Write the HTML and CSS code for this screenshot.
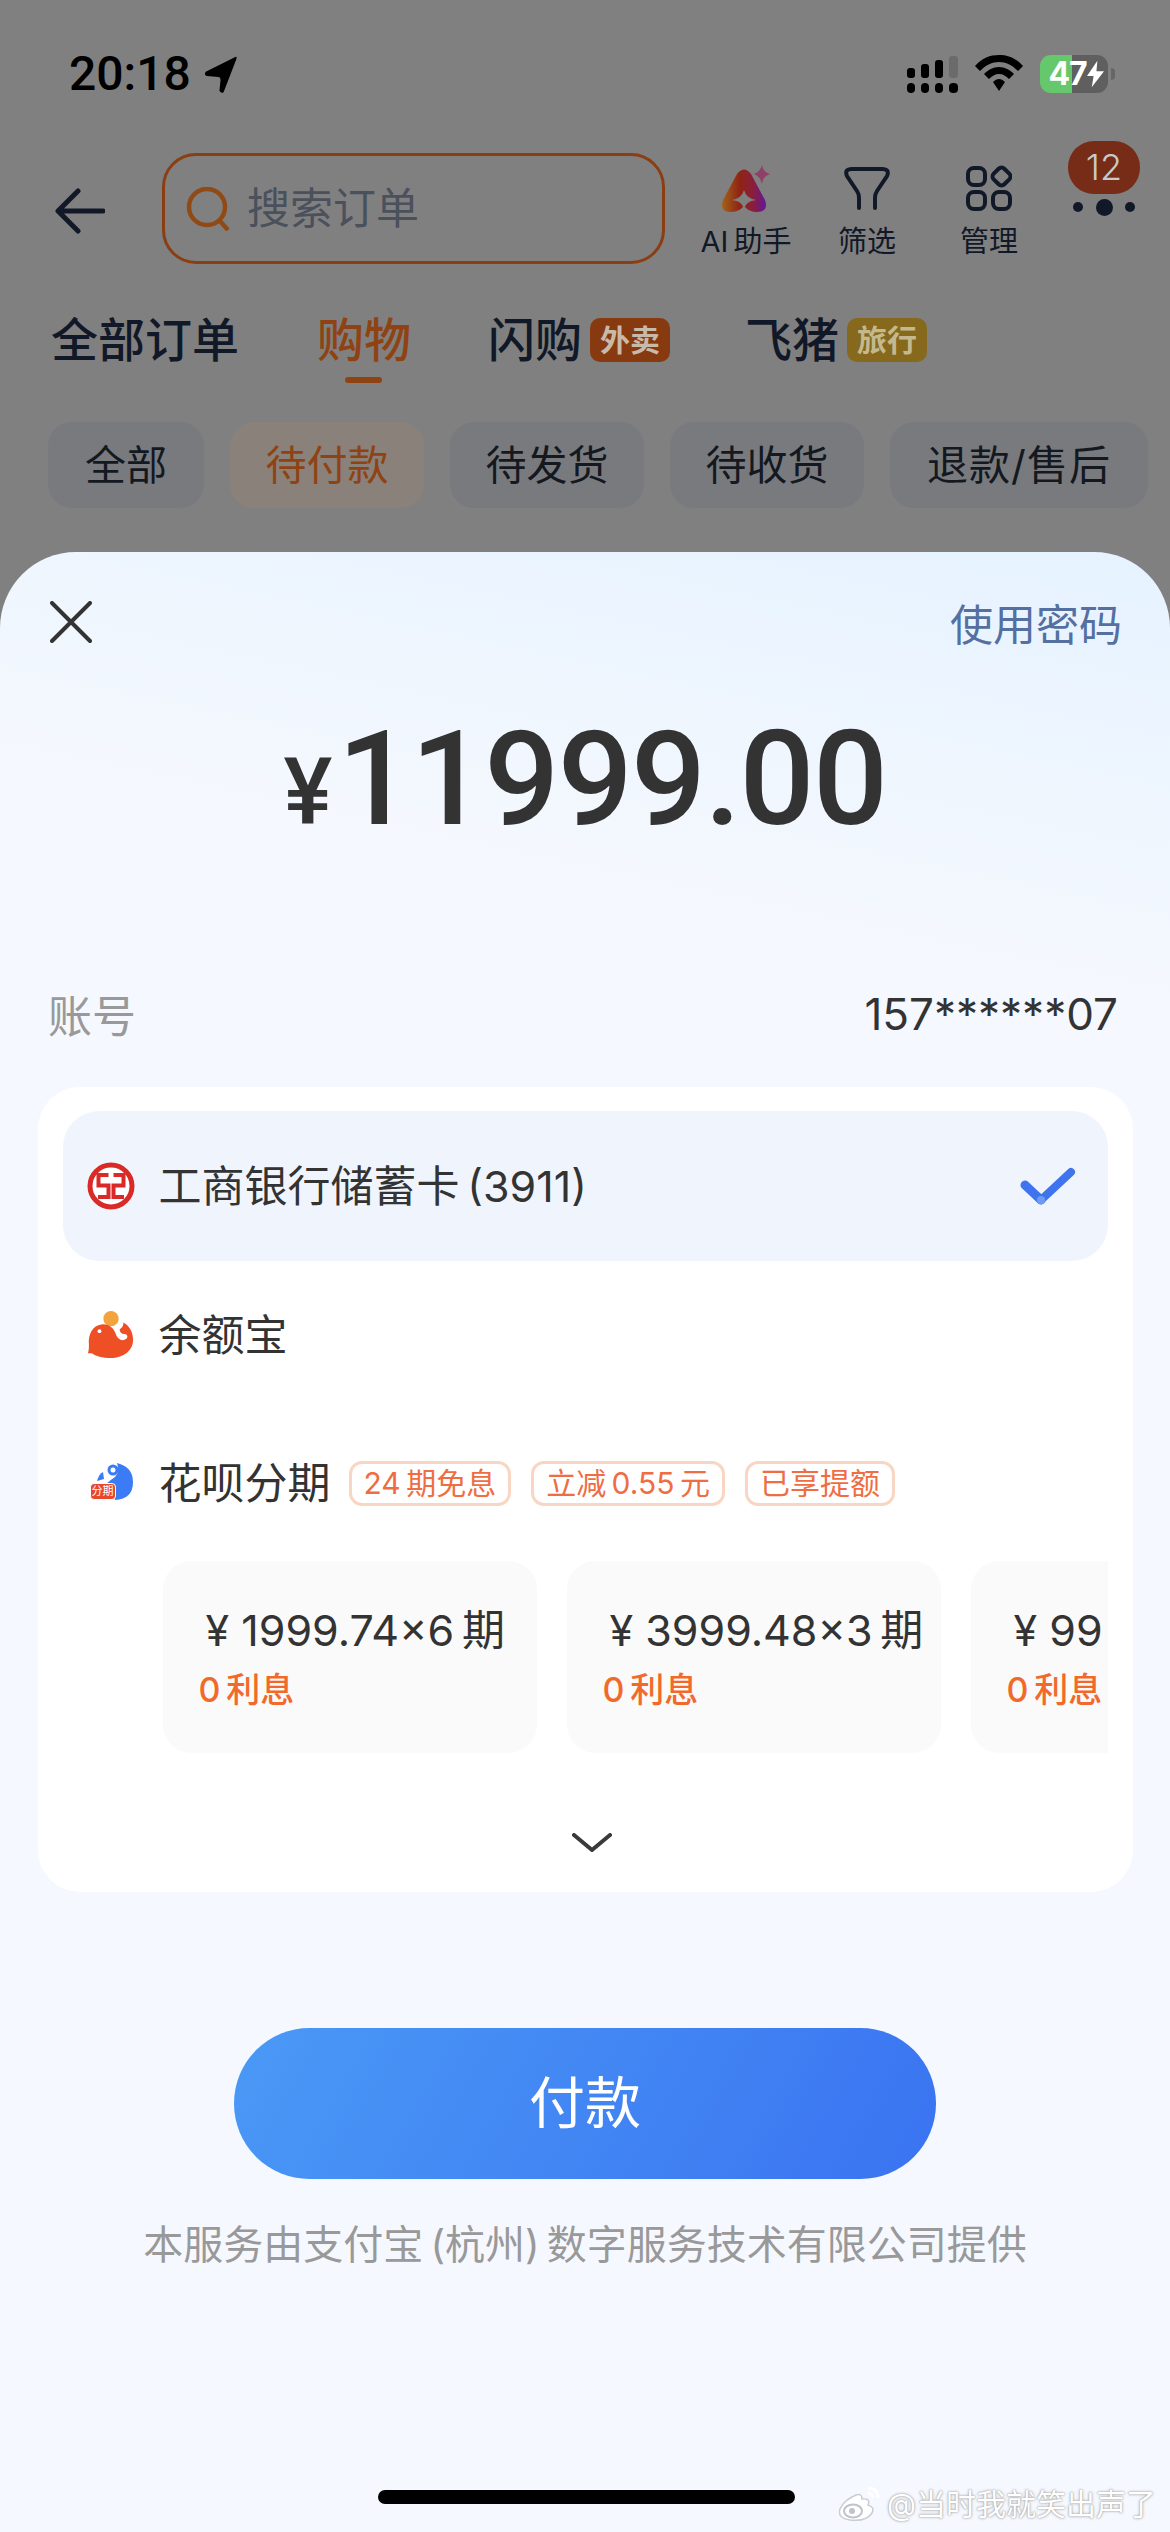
FILE: index.html
```html
<!DOCTYPE html>
<html lang="zh-CN">
<head>
<meta charset="utf-8">
<title>支付</title>
<link rel="stylesheet" href="styles.css">
</head>
<body>
<div class="page">
  <div class="status">
    <div class="status-left">
      <span class="time">20:18</span>
      <svg class="loc" viewBox="0 0 32 36"><path d="M30 1 L2 15 Q0 18 3 19 L14 20 Q16 20 16 23 L15 33 Q17 36 19 34 L31 3 Q32 0 30 1Z" fill="#000"/></svg>
    </div>
    <div class="status-right">
      <svg class="signal" viewBox="0 0 51 37">
        <rect x="0" y="12" width="8" height="10" rx="3" fill="#000"/><rect x="14" y="8" width="8" height="14" rx="3" fill="#000"/><rect x="28" y="4" width="8" height="18" rx="3" fill="#000"/><rect x="42" y="0" width="9" height="22" rx="3" fill="#6b6b6b"/>
        <rect x="0" y="27" width="8" height="10" rx="4" fill="#000"/><rect x="14" y="27" width="8" height="10" rx="4" fill="#000"/><rect x="28" y="27" width="8" height="10" rx="4" fill="#000"/><rect x="42" y="27" width="9" height="10" rx="4" fill="#000"/>
      </svg>
      <svg class="wifi" viewBox="0 0 48 36">
        <path d="M24 0 C33 0 41 3 48 11 L43 16 C37 10 31 7 24 7 C17 7 11 10 5 16 L0 11 C7 3 15 0 24 0Z" fill="#000"/>
        <path d="M24 12 C30 12 35 15 39 19 L34 24 C31 21 28 19 24 19 C20 19 17 21 14 24 L9 19 C13 15 18 12 24 12Z" fill="#000"/>
        <path d="M24 24 C26 24 28 25 30 27 L24 36 L18 27 C20 25 22 24 24 24Z" fill="#000"/>
      </svg>
      <div class="battery">
        <div class="batt-body"><span class="batt-num">47</span>
          <svg class="bolt" viewBox="0 0 18 28"><path d="M11 0 L0 16 H7 L5 28 L18 11 H10Z" fill="#fff"/></svg>
        </div>
        <span class="batt-nub"></span>
      </div>
    </div>
  </div>

  <div class="nav">
    <svg class="back" viewBox="0 0 50 46"><path d="M48 23 H4 M23 3 L3 23 L23 43" fill="none" stroke="#111827" stroke-width="5" stroke-linecap="round" stroke-linejoin="round"/></svg>
    <div class="search">
      <svg class="search-ico" viewBox="0 0 44 44"><circle cx="21" cy="20" r="18" fill="none" stroke="#8f4a16" stroke-width="4.500"/><path d="M33 33 L42 43" stroke="#8f4a16" stroke-width="4.500"/></svg>
      <span class="search-text">搜索订单</span>
    </div>
    <div class="tool tool-ai">
      <svg class="tool-ico" viewBox="0 0 50 48">
        <defs><linearGradient id="aig" x1="0" y1="0.500" x2="1" y2="0.500"><stop offset="0" stop-color="#a2641a"/><stop offset="0.400" stop-color="#8f2413"/><stop offset="0.700" stop-color="#8a1e3a"/><stop offset="1" stop-color="#64169a"/></linearGradient></defs>
        <path d="M16 9 Q23 0 30 9 L44 35 Q48 47 36 47 Q28 47 23 41 Q18 47 9 47 Q-2 47 2 35Z" fill="url(#aig)"/>
        <path d="M23 25 Q25 33 35 35 Q25 36 23 44 Q21 36 11 35 Q21 33 23 25Z" fill="#808080"/>
        <path d="M41 0 Q42 7 49 9 Q42 11 41 19 Q39 11 33 9 Q39 7 41 0Z" fill="#8f3f68"/>
      </svg>
      <span class="tool-label">AI&thinsp;助手</span>
    </div>
    <div class="tool tool-filter">
      <svg class="tool-ico" viewBox="0 0 46 44"><path d="M15 42 V32 Q15 28 13 25 L3 10 Q0 3 8 3 H38 Q46 3 43 10 L33 25 Q31 28 31 32 V42" fill="none" stroke="#111827" stroke-width="4" stroke-linecap="round"/></svg>
      <span class="tool-label">筛选</span>
    </div>
    <div class="tool tool-manage">
      <svg class="tool-ico" viewBox="0 0 46 46">
        <g fill="none" stroke="#111827" stroke-width="4"><rect x="2" y="3" width="17" height="17" rx="6"/><rect x="2" y="27" width="17" height="17" rx="6"/><rect x="27" y="27" width="17" height="17" rx="6"/><rect x="28" y="4" width="15" height="15" rx="4" transform="rotate(45 35.500 11.500)"/></g>
      </svg>
      <span class="tool-label">管理</span>
    </div>
    <div class="more">
      <span class="count">12</span>
      <span class="dots"><i class="dot"></i><i class="dot dot-big"></i><i class="dot"></i></span>
    </div>
  </div>

  <div class="tabs">
    <span class="tab">全部订单</span>
    <span class="tab tab-active">购物</span>
    <span class="tab tab-flash">闪购<em class="mini mini-red">外卖</em></span>
    <span class="tab tab-fly">飞猪<em class="mini mini-gold">旅行</em></span>
  </div>

  <div class="chips">
    <span class="chip chip-a">全部</span>
    <span class="chip chip-b chip-on">待付款</span>
    <span class="chip chip-b">待发货</span>
    <span class="chip chip-b">待收货</span>
    <span class="chip chip-c">退款/售后</span>
  </div>

  <div class="sheet">
    <div class="sheet-top">
      <svg class="close" viewBox="0 0 42 42"><path d="M2 2 L40 40 M40 2 L2 40" stroke="#333" stroke-width="4" stroke-linecap="round"/></svg>
      <span class="pwd">使用密码</span>
    </div>
    <div class="amount"><span class="yen">¥</span><span class="num">11999.00</span></div>
    <div class="account"><span class="acc-label">账号</span><span class="acc-val">157******07</span></div>

    <div class="card">
      <div class="row row-on">
        <svg class="pay-ico" viewBox="0 0 48 48">
          <circle cx="24" cy="24" r="21" fill="#fff" stroke="#d92a27" stroke-width="5"/>
          <path d="M21.500 13 H11.500 V23.500 H21.500 V35 H11 M26.500 13 H36.500 V23.500 H26.500 V35 H37" fill="none" stroke="#d92a27" stroke-width="4"/>
        </svg>
        <span class="row-text">工商银行储蓄卡&thinsp;(3911)</span>
        <svg class="check" viewBox="0 0 56 40">
          <path d="M5 19 L21 34" fill="none" stroke="#3f74ee" stroke-width="9" stroke-linecap="round"/>
          <path d="M21 34 L51 6" fill="none" stroke="#3f74ee" stroke-width="8" stroke-linecap="round"/>
          <circle cx="21" cy="34" r="4" fill="#6e9bf3"/>
        </svg>
      </div>
      <div class="row row-yu">
        <svg class="pay-ico" viewBox="0 0 48 50">
          <circle cx="24" cy="8" r="8" fill="#f2a33c"/>
          <path d="M14 14 C22 13 27 18 29 24 C31 30 36 32 40 29 C42 27 41 24 38 24 C35 24 33 22 33 19 C35 18 37 16 37 12 C44 16 47 23 47 30 C47 42 36 49 24 49 C15 49 8 47 4 44 L0 44 C1 41 1 38 1 35 C0 24 5 15 14 14Z" fill="#ee4f24"/>
          <circle cx="12" cy="21" r="2" fill="#fff"/>
        </svg>
        <span class="row-text">余额宝</span>
      </div>
      <div class="row row-hua">
        <span class="hua">
          <svg class="hua-moon" viewBox="0 0 40 38">
            <path d="M24 0 Q40 4 40 19 Q40 36 22 37 L22 30 L12 22 Q16 18 22 14 Q27 9 24 0Z" fill="#3c7bf6"/>
            <circle cx="20" cy="7" r="4" fill="none" stroke="#3c7bf6" stroke-width="3"/>
            <path d="M4 18 Q6 11 10 9 L11 16Z" fill="#3c7bf6"/>
          </svg>
          <span class="hua-badge">分期</span>
        </span>
        <span class="row-text">花呗分期</span>
        <span class="tags">
          <span class="tag">24&thinsp;期免息</span>
          <span class="tag">立减&thinsp;0.55&thinsp;元</span>
          <span class="tag">已享提额</span>
        </span>
      </div>
      <div class="plans">
        <div class="plan"><span class="plan-main">¥ 1999.74×6&thinsp;期</span><span class="plan-sub">0&thinsp;利息</span></div>
        <div class="plan"><span class="plan-main">¥ 3999.48×3&thinsp;期</span><span class="plan-sub">0&thinsp;利息</span></div>
        <div class="plan"><span class="plan-main">¥ 99</span><span class="plan-sub">0&thinsp;利息</span></div>
      </div>
      <svg class="chev" viewBox="0 0 40 20"><path d="M2 2 L20 17 L38 2" fill="none" stroke="#3a3a3a" stroke-width="4" stroke-linecap="round" stroke-linejoin="round"/></svg>
    </div>

    <div class="pay">付款</div>
    <div class="foot">本服务由支付宝&thinsp;(杭州)&thinsp;数字服务技术有限公司提供</div>
  </div>

  <div class="home"></div>
  <div class="mark">
    <svg class="weibo" viewBox="0 0 44 38">
      <path d="M18 11 Q6 16 2 25 Q-1 34 12 36 Q28 38 34 29 Q37 23 30 21 Q33 14 24 15 Q24 9 18 11Z" fill="#fff" stroke="#c9ccd2" stroke-width="1.500"/>
      <ellipse cx="15" cy="27" rx="9" ry="6.500" fill="none" stroke="#bfc3ca" stroke-width="2"/>
      <circle cx="14" cy="27" r="3" fill="#bfc3ca"/>
      <path d="M30 4 Q40 4 40 14 M30 9 Q35 9 35 14" fill="none" stroke="#fff" stroke-width="3"/>
    </svg>
    <span class="mark-text">@当时我就笑出声了</span>
  </div>
</div>
</body>
</html>
```

FILE: styles.css
```css
* { box-sizing: border-box; }
html, body { margin: 0; padding: 0; }
body { font-family: "Inter", "Noto Sans CJK SC", sans-serif; }
em, i { font-style: normal; }
svg { display: block; flex: none; }

.page {
  position: relative;
  width: 1170px;
  height: 2532px;
  overflow: hidden;
  background: #808080;
  display: flex;
  flex-direction: column;
}

/* status bar */
.status {
  height: 153px;
  padding: 55px 55px 0 69px;
  display: flex;
  justify-content: space-between;
  align-items: flex-start;
}
.status-left { display: flex; align-items: center; gap: 11px; height: 38px; }
.time { font-family: "Roboto", sans-serif; font-size: 48px; font-weight: 500; color: #000; line-height: 38px; }
.loc { width: 37px; height: 38px; margin-top: 1px; }
.status-right { display: flex; align-items: flex-start; }
.signal { width: 51px; height: 37px; margin-top: 1px; }
.wifi { width: 48px; height: 36px; margin-left: 17px; }
.battery { display: flex; align-items: center; margin-left: 17px; }
.batt-body {
  width: 68px; height: 38px; border-radius: 11px;
  background: linear-gradient(90deg, #66c86d 0 47%, #5f5f5f 47% 100%);
  display: flex; align-items: center; justify-content: center; gap: 0;
  padding-left: 4px;
}
.batt-num { font-family: "Inter", sans-serif; font-size: 32px; font-weight: 700; color: #fff; line-height: 38px; letter-spacing: -1px; }
.bolt { width: 17px; height: 28px; }
.batt-nub { width: 4px; height: 12px; background: #666; border-radius: 0 4px 4px 0; margin-left: 3px; }

/* nav row */
.nav {
  height: 111px;
  padding-left: 55px;
  display: flex;
  align-items: flex-start;
}
.back { width: 50px; height: 46px; margin-top: 35px; }
.search {
  width: 503px; height: 111px; margin-left: 57px;
  border: 3px solid #8a3e12;
  border-radius: 34px;
  display: flex; align-items: center;
  padding-left: 21px; gap: 17px;
}
.search-ico { width: 44px; height: 44px; }
.search-text { font-size: 43px; color: #4a505c; line-height: 1; }
.tool { display: flex; flex-direction: column; align-items: center; width: 80px; margin-top: 12px; }
.tool-ico { height: 46px; width: 46px; }
.tool-ai { margin-left: 31px; width: 100px; }
.tool-ai .tool-ico { width: 50px; height: 48px; }
.tool-filter { margin-left: 31px; }
.tool-manage { margin-left: 42px; }
.tool-label { font-size: 29px; line-height: 36px; color: #111827; margin-top: 13px; white-space: nowrap; }
.tool-ai .tool-label { margin-top: 11px; }
.more { position: relative; margin-left: 39px; width: 74px; height: 70px; margin-top: -12px; }
.count {
  position: absolute; left: 0; top: 0;
  width: 72px; height: 53px; border-radius: 26px;
  background: #762c17; color: #c9c9c9;
  font-size: 36px; font-weight: 300; line-height: 53px; text-align: center;
}
.dots { position: absolute; left: 5px; top: 57px; width: 62px; display: flex; align-items: center; justify-content: space-between; height: 18px; }
.dot { width: 10px; height: 10px; border-radius: 50%; background: #111827; }
.dot-big { width: 17px; height: 17px; }

/* tabs */
.tabs {
  margin-top: 53px;
  padding-left: 51px;
  height: 69px;
  display: flex;
  align-items: flex-start;
  font-size: 47px;
  font-weight: 500;
  line-height: 46px;
  color: #111827;
}
.tab { display: flex; align-items: center; height: 46px; position: relative; white-space: nowrap; }
.tab-active { margin-left: 78px; color: #8f4313; }
.tab-active::after {
  content: ""; position: absolute; left: 28px; top: 60px;
  width: 37px; height: 6px; border-radius: 3px; background: #8f4313;
}
.tab-flash { margin-left: 77px; }
.tab-fly { margin-left: 75px; }
.mini {
  margin-left: 8px; width: 80px; height: 44px; border-radius: 10px;
  font-size: 30px; font-weight: 700; line-height: 44px; text-align: center; color: #c9b9a8;
}
.mini-red { background: #87390f; }
.mini-gold { background: #86691c; color: #c4b98e; }

/* chips */
.chips {
  margin-top: 36px;
  padding-left: 48px;
  display: flex;
  gap: 26px;
}
.chip {
  height: 86px; border-radius: 24px; background: #797a7e;
  font-size: 41px; line-height: 86px; text-align: center; color: #14181f; white-space: nowrap;
}
.chip-a { width: 156px; }
.chip-b { width: 194px; }
.chip-c { width: 258px; letter-spacing: 1px; }
.chip-on { background: #8a817a; color: #8f4313; }

/* sheet */
.sheet {
  margin-top: 44px;
  flex: 1;
  border-radius: 76px 76px 0 0;
  background: linear-gradient(192deg, #e6f2ff 0, #ecf5ff 180px, #f5f8fe 440px, #f5f8fe 100%);
  display: flex;
  flex-direction: column;
  align-items: center;
}
.sheet-top {
  width: 100%;
  padding: 49px 48px 0 50px;
  display: flex;
  justify-content: space-between;
  align-items: flex-start;
}
.close { width: 42px; height: 42px; }
.pwd { font-size: 43px; line-height: 48px; color: #5470a0; }

.amount {
  margin-top: 55px;
  height: 150px;
  display: flex;
  align-items: baseline;
  color: #333;
  font-family: "Roboto", sans-serif;
  line-height: 150px;
}
.yen { font-size: 92px; font-weight: 500; margin-right: 5px; }
.num { font-size: 132px; font-weight: 500; letter-spacing: -1.600px; }

.account {
  width: 100%;
  margin-top: 130px;
  padding: 0 52px 0 48px;
  display: flex;
  justify-content: space-between;
  align-items: center;
  height: 60px;
}
.acc-label { font-size: 44px; color: #999; }
.acc-val { font-size: 44px; color: #333; }

.card {
  margin-top: 43px;
  width: 1095px;
  height: 805px;
  background: #fff;
  border-radius: 42px;
  padding: 24px 25px 0;
  display: flex;
  flex-direction: column;
}
.row { height: 150px; flex: none; padding: 0 24px; display: flex; align-items: center; border-radius: 36px; }
.row-on { background: #f0f5fd; }
.row-yu { margin-top: -1px; }
.row-hua { margin-top: -2px; }
.pay-ico { width: 48px; height: 48px; margin-right: 24px; }
.row-text { font-size: 43px; color: #333; line-height: 1; white-space: nowrap; }
.check { width: 56px; height: 40px; margin-left: auto; margin-right: 8px; }

.hua { position: relative; width: 48px; height: 40px; margin-right: 24px; flex: none; }
.hua-moon { position: absolute; left: 6px; top: 0; width: 40px; height: 38px; }
.hua-badge {
  position: absolute; left: 3px; top: 20px; width: 26px; height: 17px;
  background: #e8472b; border: 1px solid #fff; border-radius: 4px;
  color: #fff; font-size: 11px; line-height: 15px; text-align: center; white-space: nowrap;
}
.tags { display: flex; gap: 20px; margin-left: 18px; }
.tag {
  height: 45px; padding: 0 12px; border: 3px solid #f9d6c3; border-radius: 13px;
  font-size: 30px; line-height: 39px; color: #ef6d42; white-space: nowrap;
}

.plans {
  margin-top: 3px;
  margin-left: 100px;
  display: flex;
  gap: 30px;
  overflow: hidden;
  height: 192px;
  flex: none;
}
.plan {
  width: 374px; height: 192px; flex: none;
  background: #fafafa; border-radius: 28px;
  padding: 44px 0 0 36px;
  display: flex; flex-direction: column;
}
.plan-main { font-size: 43px; line-height: 50px; color: #333; white-space: nowrap; padding-left: 7px; }
.plan-sub { margin-top: 15px; font-size: 34px; font-weight: 500; line-height: 40px; color: #f26a2b; }
.chev { width: 40px; height: 20px; margin: 80px 0 0 509px; }

.pay {
  margin-top: 136px;
  width: 702px; height: 151px;
  border-radius: 76px;
  background: linear-gradient(120deg, #4a99f6 0, #3a73f1 100%);
  color: #fff;
  font-size: 56px;
  line-height: 151px;
  text-align: center;
}
.foot { margin-top: 38px; font-size: 40px; line-height: 56px; color: #999; white-space: nowrap; }

/* overlays */
.home { position: absolute; left: 378px; top: 2490px; width: 417px; height: 14px; border-radius: 7px; background: #000; }
.mark { position: absolute; left: 838px; top: 2484px; display: flex; align-items: flex-end; gap: 5px; }
.weibo { width: 44px; height: 38px; }
.mark-text { font-size: 30px; line-height: 36px; color: #fff; text-shadow: 0 0 3px #9a9a9a, 0 0 1px #9a9a9a; white-space: nowrap; }
```
